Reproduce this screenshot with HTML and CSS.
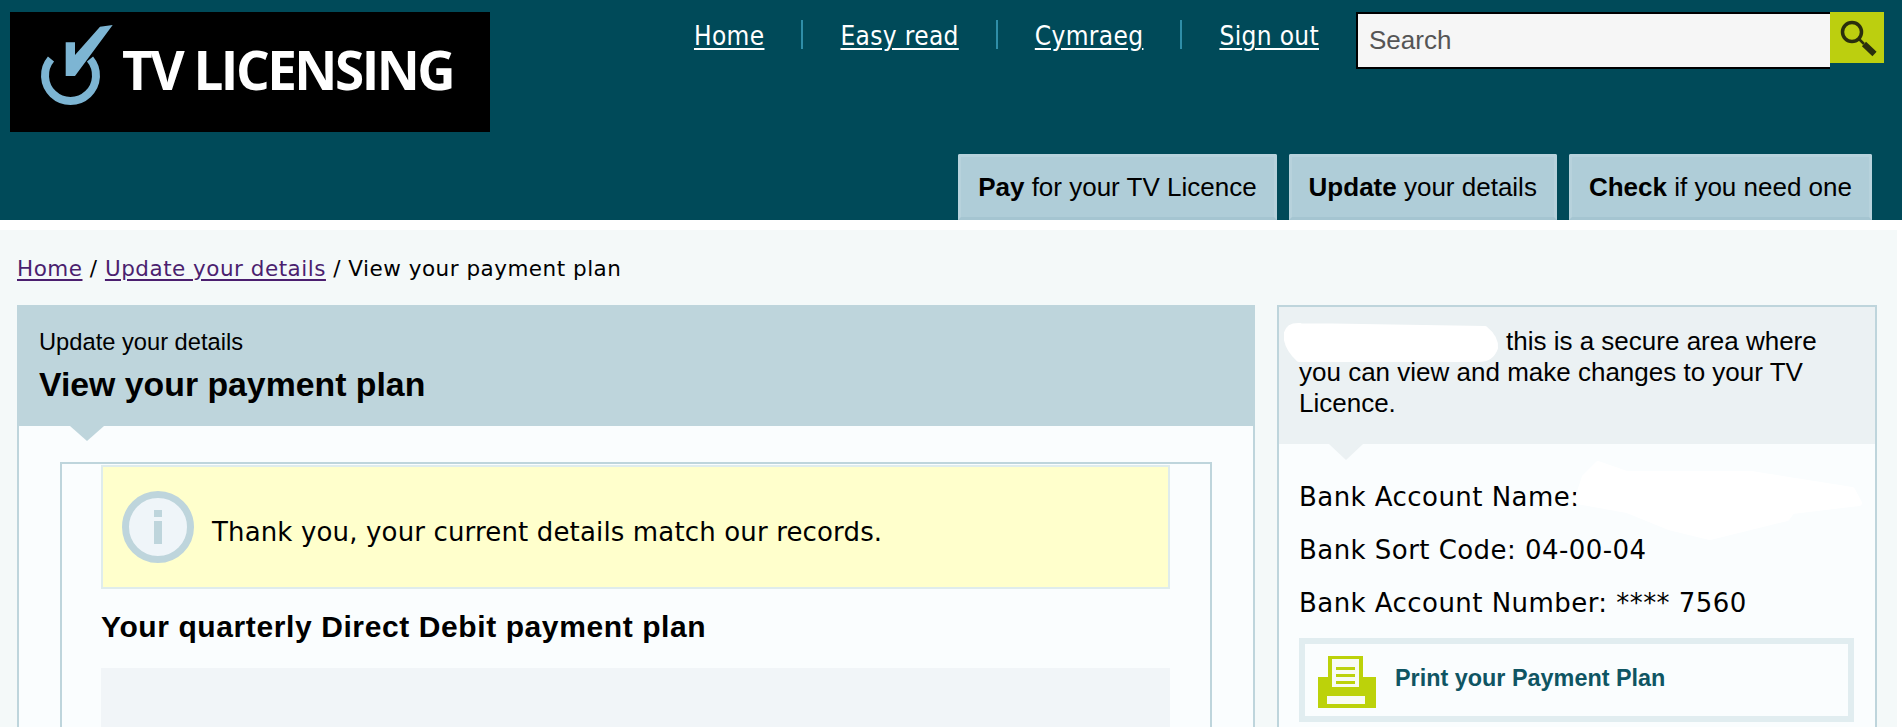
FILE: index.html
```html
<!DOCTYPE html>
<html lang="en">
<head>
<meta charset="utf-8">
<title>View your payment plan - TV Licensing</title>
<link rel="stylesheet" href="styles.css">
</head>
<body>
<header class="site-header">
  <div class="top-row">
    <a class="logo" href="#">
      <svg class="logo-mark" viewBox="0 0 84 84" aria-hidden="true">
        <path class="logo-ring" d="M11 35 A25.500 25.500 0 1 0 50 35"/>
        <path class="logo-tick" d="M25.700 18.300H35V31L60 2.700 72.700 1 35 52H25.700Z"/>
      </svg>
      <span class="logo-text">TV LICENSING</span>
    </a>
    <nav class="util-nav">
      <a href="#">Home</a><span class="util-sep"></span>
      <a href="#">Easy read</a><span class="util-sep"></span>
      <a href="#">Cymraeg</a><span class="util-sep"></span>
      <a href="#">Sign out</a>
    </nav>
    <form class="search">
      <input class="search-input" type="text" placeholder="Search" aria-label="Search">
      <button class="search-btn" type="button" aria-label="Search">
        <svg viewBox="0 0 54 51" aria-hidden="true">
          <circle cx="22" cy="20" r="9.500" class="search-ring"/>
          <path d="M29 27L34 32" class="search-neck"/>
          <path d="M34 32L44.500 42" class="search-handle"/>
        </svg>
      </button>
    </form>
  </div>
  <div class="tabs">
    <a class="tab" href="#"><b>Pay</b> for your TV Licence</a>
    <a class="tab" href="#"><b>Update</b> your details</a>
    <a class="tab" href="#"><b>Check</b> if you need one</a>
  </div>
</header>
<main class="page">
  <p class="crumbs"><a href="#">Home</a> / <a href="#">Update your details</a> / View your payment plan</p>
  <div class="columns">
    <section class="panel-main">
      <div class="main-head">
        <p class="main-kicker">Update your details</p>
        <h1 class="main-title">View your payment plan</h1>
      </div>
      <div class="main-body">
        <div class="inner">
          <div class="notice">
            <svg class="notice-icon" viewBox="0 0 72 72" aria-hidden="true">
              <circle cx="36" cy="36" r="32.500" class="notice-ring"/>
              <rect x="32" y="19" width="8" height="7" class="notice-i"/>
              <rect x="32" y="30" width="8" height="23" class="notice-i"/>
            </svg>
            <p class="notice-text">Thank you, your current details match our records.</p>
          </div>
          <h2 class="plan-title">Your quarterly Direct Debit payment plan</h2>
          <div class="plan-table"></div>
        </div>
      </div>
    </section>
    <aside class="panel-side">
      <div class="side-head">
        <p class="side-intro"><span class="name-gap"></span>this is a secure area where you can view and make changes to your TV Licence.</p>
      </div>
      <div class="side-body">
        <p class="bank-line">Bank Account Name:</p>
        <p class="bank-line">Bank Sort Code: 04-00-04</p>
        <p class="bank-line">Bank Account Number: **** 7560</p>
        <a class="print" href="#">
          <svg class="print-icon" viewBox="0 0 60 52" aria-hidden="true">
            <path class="printer-body" d="M11 0H46V21H59V52H1V21H11Z"/>
            <rect class="printer-white" x="15" y="3" width="27" height="28"/>
            <path class="printer-lines" d="M19 12.500H38M19 19.500H38M19 26.500H38"/>
            <rect class="printer-white" x="10" y="40" width="38" height="8"/>
          </svg>
          <span>Print your Payment Plan</span>
        </a>
      </div>
      <svg class="redactions" viewBox="1277 305 600 300" aria-hidden="true">
        <path d="M1287 333Q1289 325 1301 326L1485 329Q1496 338 1495 348Q1491 359 1479 359L1299 359Q1289 350 1287 340Z"/>
        <path d="M1585 477L1598 464L1627 474L1751 474L1852 490L1859 503L1792 511L1787 518L1710 537L1669 527L1627 510L1577 501Z"/>
      </svg>
    </aside>
  </div>
</main>
</body>
</html>
```
FILE: styles.css
```css
* { box-sizing: border-box; }
html, body { margin: 0; padding: 0; height: 100%; overflow: hidden; }
body {
  background: #fff;
  color: #000;
  font-family: "Liberation Sans", Arial, sans-serif;
}
p, h1, h2 { margin: 0; }

.site-header {
  height: 220px;
  background: #004a59;
  display: flex;
  flex-direction: column;
}
.top-row {
  display: flex;
  align-items: flex-start;
  padding: 12px 18px 0 10px;
}
.logo {
  width: 480px;
  height: 120px;
  background: #000;
  display: flex;
  align-items: flex-start;
  text-decoration: none;
  flex: none;
}
.logo-mark { width: 84px; height: 84px; margin: 12px 0 0 30px; flex: none; }
.logo-ring { fill: none; stroke: #7db5d3; stroke-width: 8; }
.logo-tick { fill: #7db5d3; }
.logo-text {
  color: #fff;
  font-family: "Open Sans", sans-serif;
  font-weight: 700;
  font-size: 53px;
  line-height: 72px;
  margin: 22px 0 0 -2px;
  letter-spacing: -2.500px;
  white-space: nowrap;
}
.util-nav {
  margin-left: auto;
  display: flex;
  align-items: flex-start;
  font-family: "DejaVu Sans", Verdana, sans-serif;
  font-stretch: condensed;
  font-size: 26px;
  letter-spacing: 0.35px;
  line-height: 32px;
  margin-top: 8px;
}
.util-nav a { color: #fff; text-underline-offset: 3px; }
.util-sep {
  width: 2px;
  height: 29px;
  background: #2f8ea8;
  margin: 0 37px;
}
.search { display: flex; align-items: flex-start; margin-left: 37px; }
.search-input {
  width: 474px;
  height: 57px;
  border: 2px solid #000;
  border-right: 0;
  background: #f6f6f6;
  padding: 0 0 0 11px;
  font: 26px "Liberation Sans", Arial, sans-serif;
  outline: none;
}
.search-input::placeholder { color: #555; opacity: 1; }
.search-btn {
  width: 54px;
  height: 51px;
  padding: 0;
  border: 0;
  background: #bccf0f;
}
.search-btn svg { display: block; width: 54px; height: 51px; }
.search-ring { fill: none; stroke: #2a2f0d; stroke-width: 3.500; }
.search-neck { stroke: #2a2f0d; stroke-width: 2.500; }
.search-handle { stroke: #2a2f0d; stroke-width: 6; }

.tabs {
  margin-top: auto;
  display: flex;
  justify-content: flex-end;
  gap: 12px;
  padding-right: 30px;
}
.tab {
  display: block;
  height: 66px;
  padding: 0 17px;
  line-height: 60px;
  background: #afcdd8;
  border: 3px solid #b7d2dc;
  border-bottom-color: #a5c5d1;
  border-radius: 2px 2px 0 0;
  color: #000;
  text-decoration: none;
  font-size: 26px;
  white-space: nowrap;
}

.page {
  margin: 10px 5px 0 0;
  height: 497px;
  background: #f4f9f9;
  padding: 0 0 0 17px;
  overflow: hidden;
}
.crumbs {
  font-family: "DejaVu Sans", Verdana, sans-serif;
  font-size: 21.500px;
  letter-spacing: 0.5px;
  line-height: 30px;
  padding-top: 24px;
  height: 75px;
}
.crumbs a { color: #4b1f6f; text-underline-offset: 3px; }

.columns { display: flex; gap: 22px; align-items: flex-start; }

.panel-main { width: 1238px; flex: none; }
.main-head {
  position: relative;
  height: 121px;
  background: #bed5dc;
  padding: 22px 22px 0;
}
.main-head::after {
  content: "";
  position: absolute;
  left: 53px;
  top: 100%;
  border-style: solid;
  border-width: 15px 17px 0;
  border-color: #bed5dc transparent transparent;
}
.main-kicker { font-size: 23.700px; line-height: 30px; }
.main-title { font-size: 33.800px; line-height: 46px; font-weight: 700; margin-top: 4px; }
.main-body {
  border: solid #bed5dc;
  border-width: 0 2px;
  background: #fafdfe;
  padding: 36px 41px 0;
}
.inner {
  border: 2px solid #bed5dc;
  border-bottom: 0;
  padding: 1px 40px 0 39px;
  height: 400px;
}
.notice {
  height: 124px;
  background: #ffc;
  border: 2px solid #dfecec;
  display: flex;
  align-items: flex-start;
  padding: 24px 0 0 19px;
  gap: 18px;
}
.notice-icon { width: 72px; height: 72px; flex: none; }
.notice-ring { fill: #eff5f9; stroke: #bed5dc; stroke-width: 7; }
.notice-i { fill: #bed5dc; }
.notice-text {
  font-family: "DejaVu Sans", Verdana, sans-serif;
  font-size: 26px;
  letter-spacing: 0.15px;
  line-height: 32px;
  margin-top: 25px;
}
.plan-title { font-size: 30px; letter-spacing: 0.6px; line-height: 36px; font-weight: 700; margin-top: 20px; }
.plan-table { height: 200px; background: #f1f5f8; margin-top: 23px; }

.panel-side {
  position: relative;
  width: 600px;
  flex: none;
  border: 2px solid #bed5dc;
  border-bottom: 0;
  background: #fafdfe;
  height: 440px;
}
.side-head {
  position: relative;
  height: 137px;
  background: #ebf1f3;
  padding: 19px 20px 0;
}
.side-head::after {
  content: "";
  position: absolute;
  left: 50px;
  top: 100%;
  border-style: solid;
  border-width: 16px 17px 0;
  border-color: #ebf1f3 transparent transparent;
}
.side-intro { font-size: 26px; line-height: 31px; }
.name-gap { display: inline-block; width: 207px; }
.side-body { padding: 37px 20px 0; }
.bank-line {
  font-family: "DejaVu Sans", Verdana, sans-serif;
  font-size: 26px;
  letter-spacing: 0.45px;
  line-height: 32px;
  margin-bottom: 21px;
}
.print {
  display: flex;
  align-items: center;
  height: 84px;
  width: 555px;
  margin-top: -2px;
  border: 6px solid #e1edf0;
  padding: 0 0 3px 12px;
  color: #0f5563;
  font-size: 23.400px;
  font-weight: 700;
  text-decoration: none;
  gap: 18px;
}
.print-icon { width: 60px; height: 52px; flex: none; margin-top: 7px; }
.printer-body { fill: #bcd20a; }
.printer-white { fill: #f8fbf3; }
.printer-lines { stroke: #bcd20a; stroke-width: 3; fill: none; }
.redactions {
  position: absolute;
  left: -2px;
  top: -2px;
  width: 600px;
  height: 300px;
  pointer-events: none;
}
.redactions path { fill: #fff; stroke: #fff; stroke-width: 6; stroke-linejoin: round; }
```
